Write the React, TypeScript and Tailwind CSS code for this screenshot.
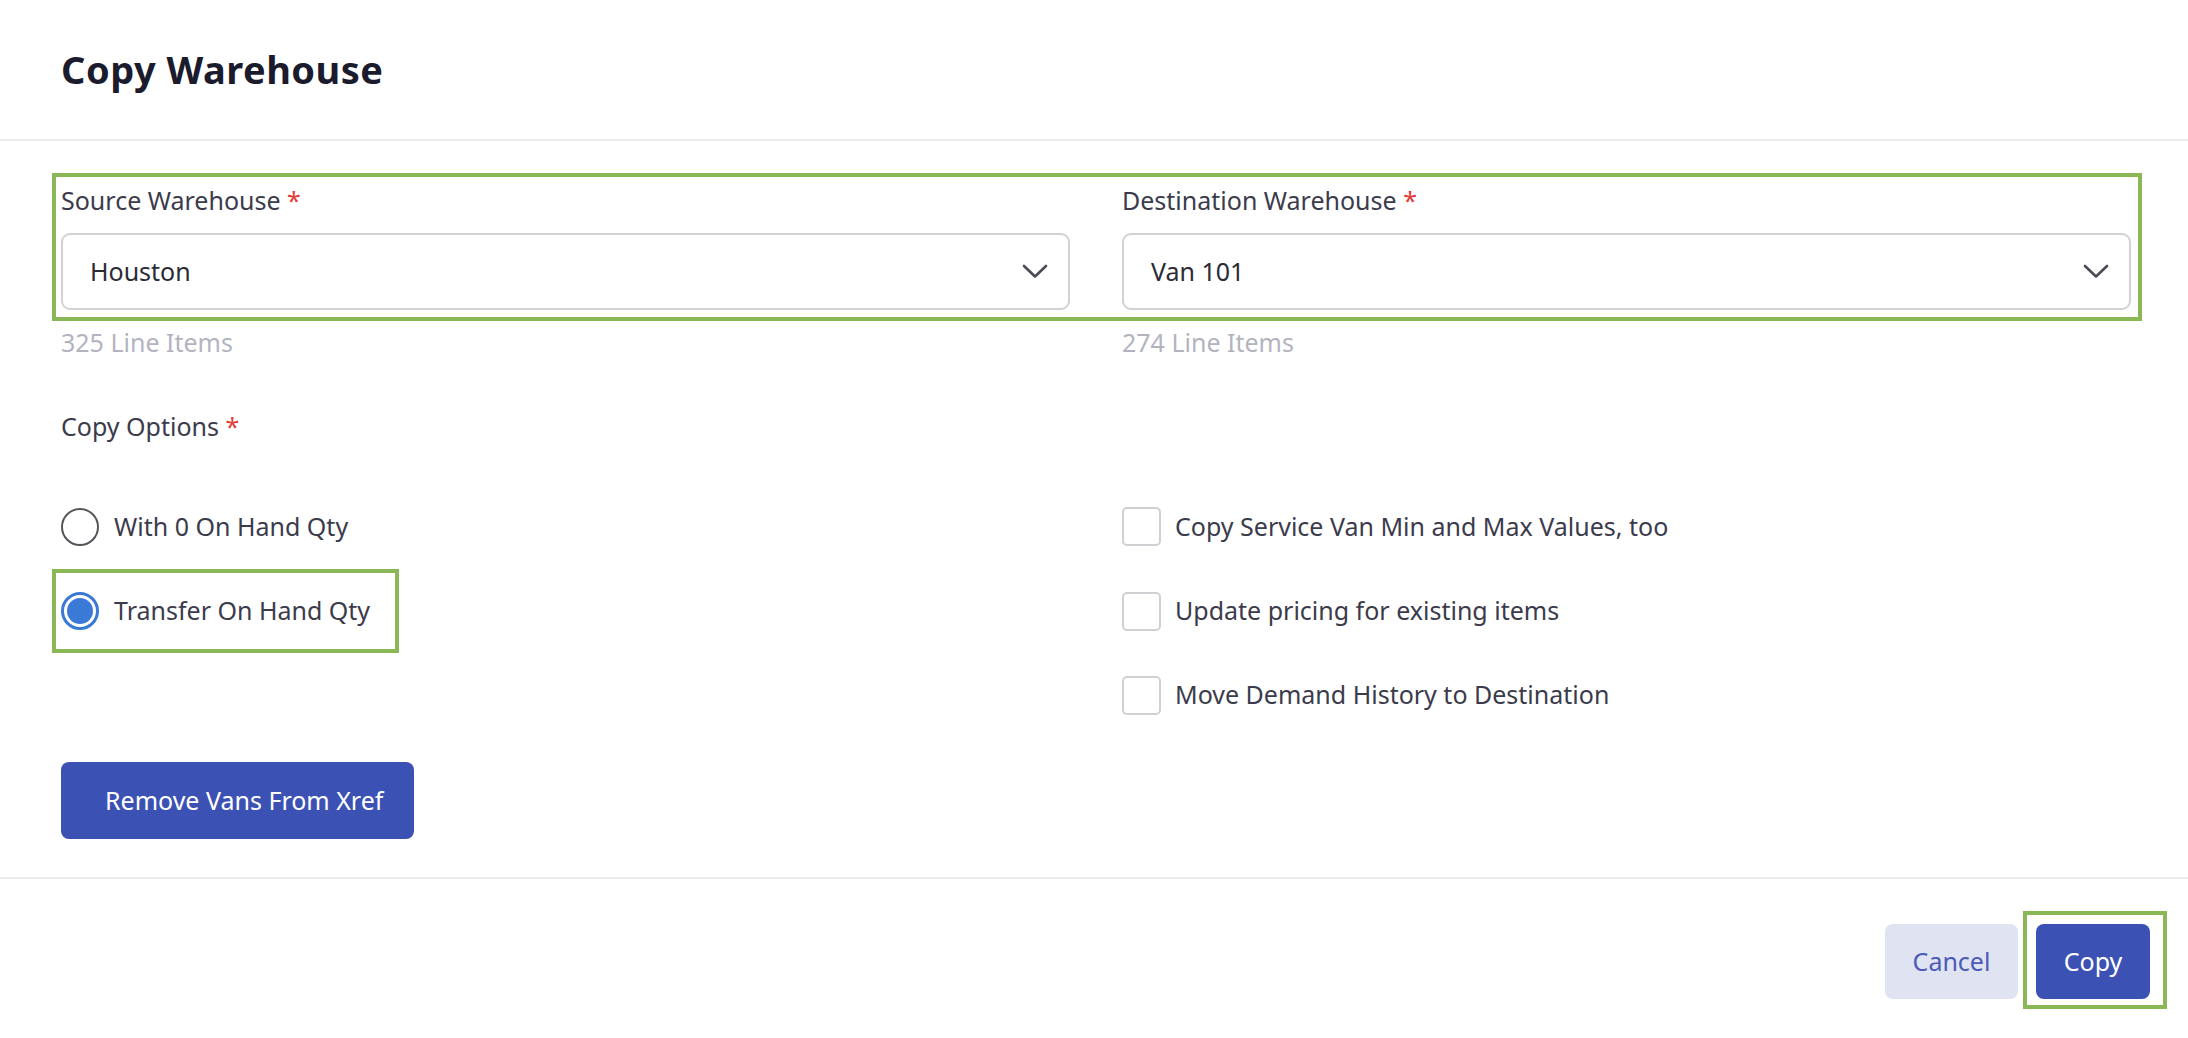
import { useState } from "react";

const font = { fontFamily: '"Noto Sans", "Open Sans", sans-serif' };

function Chevron() {
  return (
    <svg width="26" height="15" viewBox="0 0 26 15" fill="none">
      <polyline points="2,2 13,12.5 24,2" stroke="#4b4b55" strokeWidth="2.6" strokeLinecap="round" strokeLinejoin="round" />
    </svg>
  );
}

function Label({ text }: { text: string }) {
  return (
    <div className="text-[25px] leading-[28px] text-[#3b3b4c]">
      {text} <span className="text-[#e53935]">*</span>
    </div>
  );
}

function WarehouseSelect({ value }: { value: string }) {
  return (
    <div className="flex h-[77px] items-center justify-between rounded-[9px] border-2 border-[#d2d2d6] bg-white pl-[27px] pr-[20px]">
      <span className="text-[25px] text-[#2b2b36]">{value}</span>
      <Chevron />
    </div>
  );
}

function Radio({ checked }: { checked: boolean }) {
  return checked ? (
    <div className="flex h-[38px] w-[38px] items-center justify-center rounded-full border-[3px] border-[#3a7ad6] bg-white">
      <div className="h-[26px] w-[26px] rounded-full bg-[#3a7ad6]" />
    </div>
  ) : (
    <div className="h-[38px] w-[38px] rounded-full border-2 border-[#55555c] bg-white" />
  );
}

function Checkbox() {
  return <div className="h-[39px] w-[39px] rounded-[5px] border-2 border-[#d0d0d4] bg-white" />;
}

export default function App() {
  const [option, setOption] = useState("transfer");

  return (
    <div className="min-h-[1038px] w-full bg-white" style={font}>
      <div className="flex h-[141px] items-center border-b-2 border-[#ebebf0] px-[61px]">
        <h1 className="text-[38px] font-bold tracking-[0.5px] text-[#1b1b2e]">Copy Warehouse</h1>
      </div>

      <div className="pl-[52px] pr-[46px] pt-[32px]">
        <div className="grid grid-cols-2 gap-[52px] border-4 border-[#8ab856] pb-[7px] pl-[5px] pr-[7px] pt-[9px]">
          <div>
            <Label text="Source Warehouse" />
            <div className="mt-[19px]">
              <WarehouseSelect value="Houston" />
            </div>
          </div>
          <div>
            <Label text="Destination Warehouse" />
            <div className="mt-[19px]">
              <WarehouseSelect value="Van 101" />
            </div>
          </div>
        </div>

        <div className="mt-[7px] grid grid-cols-2 gap-[52px] pl-[9px] pr-[11px] text-[25px] leading-[28px] text-[#b3b3c0]">
          <div>325 Line Items</div>
          <div>274 Line Items</div>
        </div>

        <div className="mt-[56px] pl-[9px]">
          <Label text="Copy Options" />
        </div>

        <div className="mt-[44px] grid grid-cols-2 gap-[52px] pl-[9px] pr-[11px] text-[25px] text-[#3b3b4c]">
          <div className="flex flex-col">
            <button
              className="flex h-[85px] items-center gap-[15px] text-left"
              onClick={() => setOption("zero")}
            >
              <Radio checked={option === "zero"} />
              <span>With 0 On Hand Qty</span>
            </button>
            <button
              className="-ml-[9px] flex h-[84px] w-[347px] items-center gap-[15px] border-4 border-[#8ab856] pl-[5px] text-left"
              onClick={() => setOption("transfer")}
            >
              <Radio checked={option === "transfer"} />
              <span>Transfer On Hand Qty</span>
            </button>
          </div>
          <div className="flex flex-col">
            <div className="flex h-[85px] items-center gap-[14px]">
              <Checkbox />
              <span>Copy Service Van Min and Max Values, too</span>
            </div>
            <div className="flex h-[84px] items-center gap-[14px]">
              <Checkbox />
              <span>Update pricing for existing items</span>
            </div>
            <div className="flex h-[84px] items-center gap-[14px]">
              <Checkbox />
              <span>Move Demand History to Destination</span>
            </div>
          </div>
        </div>

        <div className="mt-[25px] pl-[9px]">
          <button className="h-[77px] rounded-[8px] bg-[#3c51b4] pl-[44px] pr-[31px] text-[25px] text-white">
            Remove Vans From Xref
          </button>
        </div>
      </div>

      <div className="mt-[38px] flex justify-end gap-[5px] border-t-2 border-[#ebebf0] pr-[21px] pt-[32px]">
        <div className="pt-[13px]">
          <button className="h-[75px] w-[133px] rounded-[8px] bg-[#e0e3f2] text-[25px] text-[#4a5bb8]">Cancel</button>
        </div>
        <div className="border-4 border-[#8ab856] pb-[6px] pl-[9px] pr-[13px] pt-[9px]">
          <button className="h-[75px] w-[114px] rounded-[8px] bg-[#3c51b4] text-[25px] text-white">Copy</button>
        </div>
      </div>
    </div>
  );
}
